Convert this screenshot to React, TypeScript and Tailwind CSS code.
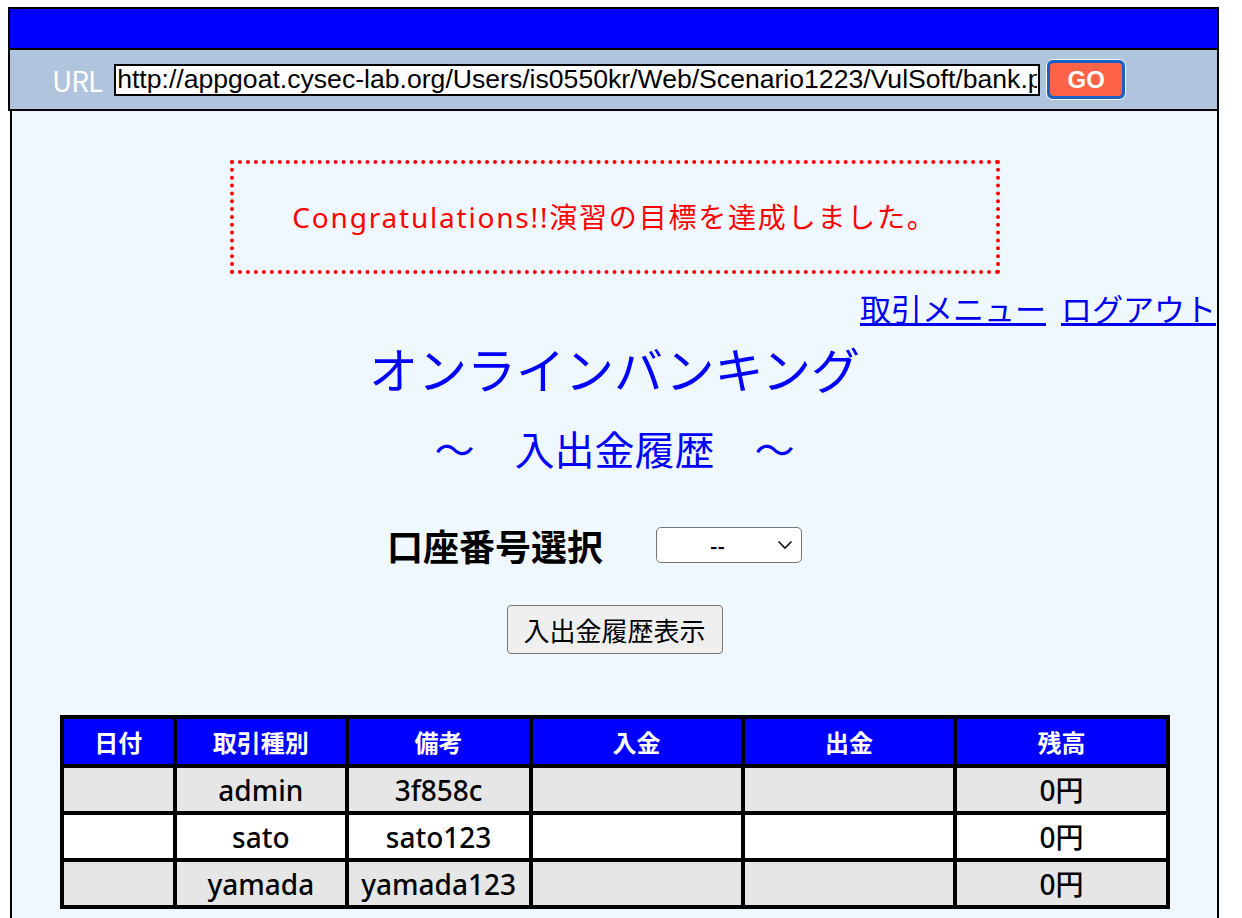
import React from "react";

const jp = { fontFamily: '"Noto Sans CJK JP", "Noto Sans", sans-serif' };
const latinJp = { fontFamily: '"Noto Sans", "Noto Sans CJK JP", sans-serif' };

const rows = [
  { type: "admin", note: "3f858c", bal: "0円", bg: "bg-[#e6e6e6]" },
  { type: "sato", note: "sato123", bal: "0円", bg: "bg-white" },
  { type: "yamada", note: "yamada123", bal: "0円", bg: "bg-[#e6e6e6]" },
];

export default function App() {
  return (
    <div className="min-h-[918px] bg-white overflow-hidden" style={jp}>
      <div className="ml-[8px] mt-[7px] w-[1211px]">
        <div className="h-[43px] bg-[#0000ff] border-2 border-black" />
        <div className="h-[61px] bg-[#b0c4de] border-x-2 border-b-2 border-black flex items-center pl-[42px]">
          <span className="text-white text-[28px] leading-none tracking-[-1px] mr-[12px]">URL</span>
          <input
            readOnly
            value="http://appgoat.cysec-lab.org/Users/is0550kr/Web/Scenario1223/VulSoft/bank.php"
            className="w-[926px] h-[32px] bg-white border-2 border-black px-[1px] text-[26.6px] leading-none text-black outline-none"
            style={{ fontFamily: '"Liberation Sans", Arial, sans-serif' }}
          />
          <div className="ml-[6px] w-[80px] h-[41px] rounded-[7px] border border-white bg-[#1a5fc4] p-[3px]">
            <div
              className="w-full h-full rounded-[4px] bg-[#ff6347] flex items-center justify-center text-white font-bold text-[24px] leading-none"
              style={{ fontFamily: '"Liberation Sans", Arial, sans-serif' }}
            >
              GO
            </div>
          </div>
        </div>
        <div className="ml-[2px] w-[1209px] min-h-[820px] border-x-2 border-black bg-[#f0f8ff] flex flex-col items-center pt-[49px]">
          <div
            className="w-[770px] h-[114px] border-[4px] border-dotted border-[#ff0000] flex items-center justify-center text-[#ff0000] text-[28px] tracking-[1.8px]"
            style={latinJp}
          >
            Congratulations!!演習の目標を達成しました。
          </div>
          <div className="self-end mt-[15px] mr-[1px] flex gap-[15px] text-[31px] leading-[38px] text-[#0000ee]">
            <a className="underline">取引メニュー</a>
            <a className="underline">ログアウト</a>
          </div>
          <div className="mt-[11px] text-[#0000ff] text-[49px] leading-[60px]">オンラインバンキング</div>
          <div className="mt-[25px] text-[#0000ff] text-[40px] leading-[50px] whitespace-pre">～　入出金履歴　～</div>
          <div className="mt-[48px] flex items-center gap-[53px] pr-[40px]">
            <span className="text-[36px] font-bold text-black leading-[48px]">口座番号選択</span>
            <div className="w-[146px] h-[36px] bg-white border border-[#767676] rounded-[5px] flex items-center justify-end pr-[8px] relative">
              <span className="absolute left-[53px] top-[3px] text-[20px] text-black font-bold">--</span>
              <svg width="16" height="10" viewBox="0 0 16 10">
                <path d="M1.5 1.5 L8 8 L14.5 1.5" fill="none" stroke="#111" strokeWidth="1.6" />
              </svg>
            </div>
          </div>
          <button className="mt-[36px] w-[216px] h-[49px] bg-[#efefef] border border-[#767676] rounded-[4px] text-[26px] text-black leading-none">
            入出金履歴表示
          </button>
          <table className="mt-[61px] border-collapse w-[1110px] border-[4px] border-black">
            <thead>
              <tr className="h-[49px] bg-[#0000ff] text-white text-[24px] font-bold">
                <th className="border-[4px] border-black w-[114px] p-0">日付</th>
                <th className="border-[4px] border-black w-[172px] p-0">取引種別</th>
                <th className="border-[4px] border-black w-[184px] p-0">備考</th>
                <th className="border-[4px] border-black w-[213px] p-0">入金</th>
                <th className="border-[4px] border-black w-[214px] p-0">出金</th>
                <th className="border-[4px] border-black w-[213px] p-0">残高</th>
              </tr>
            </thead>
            <tbody style={latinJp}>
              {rows.map((r) => (
                <tr key={r.type} className={`h-[47px] ${r.bg} text-black text-[28px] font-medium text-center`}>
                  <td className="border-[4px] border-black p-0"></td>
                  <td className="border-[4px] border-black p-0">{r.type}</td>
                  <td className="border-[4px] border-black p-0">{r.note}</td>
                  <td className="border-[4px] border-black p-0"></td>
                  <td className="border-[4px] border-black p-0"></td>
                  <td className="border-[4px] border-black p-0">{r.bal}</td>
                </tr>
              ))}
            </tbody>
          </table>
        </div>
      </div>
    </div>
  );
}
